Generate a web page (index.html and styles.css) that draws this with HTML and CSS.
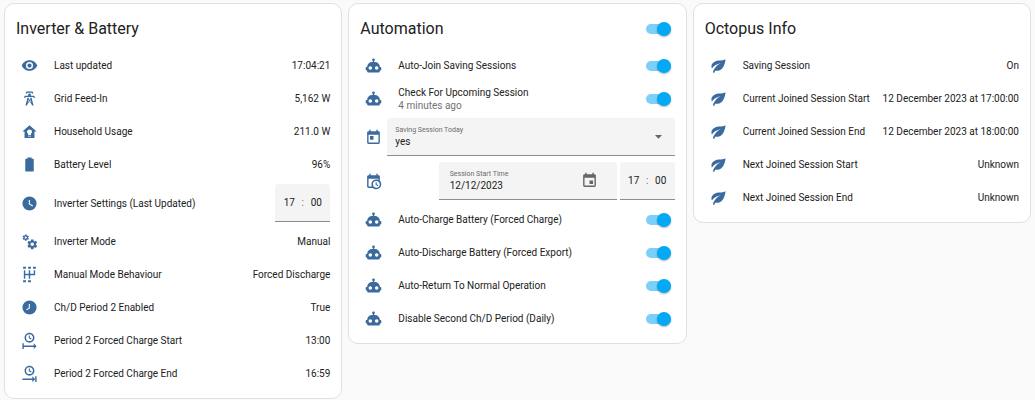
FILE: index.html
```html
<!DOCTYPE html>
<html lang="en">
<head>
    <meta charset="UTF-8">
    <meta name="viewport" content="width=device-width, initial-scale=1">
    <title>Inverter Dashboard</title>
    <link rel="stylesheet" href="styles.css">
</head>
<body>
    <!-- Icon set -->
    <svg class="icon-set" aria-hidden="true">
        <symbol id="eye" viewBox="0 0 24 24"><path d="M12,9A3,3 0 0,0 9,12A3,3 0 0,0 12,15A3,3 0 0,0 15,12A3,3 0 0,0 12,9M12,17A5,5 0 0,1 7,12A5,5 0 0,1 12,7A5,5 0 0,1 17,12A5,5 0 0,1 12,17M12,4.5C7,4.5 2.73,7.61 1,12C2.73,16.39 7,19.5 12,19.5C17,19.5 21.27,16.39 23,12C21.27,7.61 17,4.5 12,4.5Z"/></symbol>
        <symbol id="tower" viewBox="0 0 24 24"><path d="M8.28,5.45L6.5,4.55L7.76,2H16.23L17.5,4.55L15.72,5.44L15,4H9L8.28,5.45M18.62,8H14.09L13.3,5H10.7L9.91,8H5.38L4.1,10.55L5.89,11.44L6.62,10H17.38L18.1,11.45L19.89,10.56L18.62,8M17.77,22H15.7L15.46,21.1L12,15.9L8.53,21.1L8.3,22H6.23L9.12,11H11.19L10.83,12.35L12,14.1L13.16,12.35L12.81,11H14.88L17.77,22M11.4,15L10.5,13.65L9.32,18.13L11.4,15M14.68,18.12L13.5,13.64L12.6,15L14.68,18.12Z"/></symbol>
        <symbol id="home" viewBox="0 0 24 24"><path fill-rule="evenodd" d="M12,3L2,12H5V21H19V12H22L12,3M12,9A3.5,3.5 0 0,1 15.5,12.5C15.5,13.700 14.900,14.700 14,15.300V17H10V15.300C9.100,14.700 8.500,13.700 8.500,12.500A3.5,3.5 0 0,1 12,9M10,18H14V19H10Z"/></symbol>
        <symbol id="battery" viewBox="0 0 24 24"><path d="M16.67,4H15V2H9V4H7.33A1.33,1.33 0 0,0 6,5.33V20.66C6,21.4 6.6,22 7.33,22H16.66C17.4,22 18,21.4 18,20.67V5.33C18,4.6 17.4,4 16.67,4Z"/></symbol>
        <symbol id="clock" viewBox="0 0 24 24"><path d="M12,2A10,10 0 0,0 2,12A10,10 0 0,0 12,22A10,10 0 0,0 22,12A10,10 0 0,0 12,2M16.2,16.2L11,13V7H12.5V12.2L17,14.9L16.2,16.2Z"/></symbol>
        <symbol id="cogs" viewBox="0 0 24 24"><path d="M15.9,18.45C17.25,18.45 18.35,17.35 18.35,16C18.35,14.65 17.25,13.55 15.9,13.55C14.54,13.55 13.45,14.65 13.45,16C13.45,17.35 14.54,18.45 15.9,18.45M21.1,16.68L22.58,17.84C22.71,17.95 22.75,18.13 22.66,18.29L21.26,20.71C21.17,20.86 21,20.92 20.83,20.86L19.09,20.16C18.73,20.44 18.33,20.67 17.91,20.85L17.64,22.7C17.62,22.87 17.47,23 17.3,23H14.5C14.32,23 14.18,22.87 14.15,22.7L13.89,20.85C13.46,20.67 13.07,20.44 12.71,20.16L10.96,20.86C10.81,20.92 10.62,20.86 10.54,20.71L9.14,18.29C9.05,18.13 9.09,17.95 9.22,17.84L10.7,16.68L10.65,16L10.7,15.31L9.22,14.16C9.09,14.05 9.05,13.86 9.14,13.71L10.54,11.29C10.62,11.13 10.81,11.07 10.96,11.13L12.71,11.84C13.07,11.56 13.46,11.32 13.89,11.15L14.15,9.29C14.18,9.13 14.32,9 14.5,9H17.3C17.47,9 17.62,9.13 17.64,9.29L17.91,11.15C18.33,11.32 18.73,11.56 19.09,11.84L20.83,11.13C21,11.07 21.17,11.13 21.26,11.29L22.66,13.71C22.75,13.86 22.71,14.05 22.58,14.16L21.1,15.31L21.15,16L21.1,16.68M6.69,8.07C7.56,8.07 8.26,7.37 8.26,6.5C8.26,5.63 7.56,4.92 6.69,4.92A1.58,1.58 0 0,0 5.11,6.5C5.11,7.37 5.82,8.07 6.69,8.07M10.03,6.94L11,7.68C11.07,7.75 11.09,7.87 11.03,7.97L10.13,9.53C10.08,9.63 9.96,9.67 9.86,9.63L8.74,9.18L8,9.62L7.81,10.81C7.79,10.92 7.7,11 7.59,11H5.79C5.67,11 5.58,10.92 5.56,10.81L5.4,9.62L4.64,9.18L3.5,9.63C3.41,9.67 3.3,9.63 3.24,9.53L2.34,7.97C2.28,7.87 2.31,7.75 2.39,7.68L3.34,6.94L3.31,6.5L3.34,6.06L2.39,5.32C2.31,5.25 2.28,5.13 2.34,5.03L3.24,3.47C3.3,3.37 3.41,3.33 3.5,3.37L4.63,3.82L5.4,3.38L5.56,2.19C5.58,2.08 5.67,2 5.79,2H7.59C7.7,2 7.79,2.08 7.81,2.19L8,3.38L8.74,3.82L9.86,3.37C9.96,3.33 10.08,3.37 10.13,3.47L11.03,5.03C11.09,5.13 11.07,5.25 11,5.32L10.03,6.06L10.06,6.5L10.03,6.94Z"/></symbol>
        <symbol id="shifter" viewBox="0 0 24 24"><path d="M3,1H7V4H3ZM10,1H14V4H10ZM17,1H21V4H17ZM3,20H7V23H3ZM10,20H14V23H10ZM4,6H6V11H11V6H13V11H18V6H20V13H13V18H11V13H6V18H4Z"/></symbol>
        <symbol id="clock-eight" viewBox="0 0 24 24"><path d="M12,2A10,10 0 0,0 2,12A10,10 0 0,0 12,22A10,10 0 0,0 22,12A10,10 0 0,0 12,2M12.5,13L8.2,16L7.2,14.7L11,12.2V7H12.5V13Z"/></symbol>
        <symbol id="clock-start" viewBox="0 0 24 24"><path d="M12,1C8.14,1 5,4.14 5,8A7,7 0 0,0 12,15C15.86,15 19,11.87 19,8C19,4.14 15.86,1 12,1M12,3.15C14.67,3.15 16.85,5.32 16.85,8C16.85,10.68 14.67,12.85 12,12.85A4.85,4.85 0 0,1 7.15,8A4.85,4.85 0 0,1 12,3.15M11,5V8.69L14.19,10.53L14.94,9.23L12.5,7.82V5M2,16V24H4V21H18V24L22,20L18,16V19H4V16"/></symbol>
        <symbol id="clock-end" viewBox="0 0 24 24"><path d="M12,1C8.14,1 5,4.14 5,8A7,7 0 0,0 12,15C15.86,15 19,11.87 19,8C19,4.14 15.86,1 12,1M12,3.15C14.67,3.15 16.85,5.32 16.85,8C16.85,10.68 14.67,12.85 12,12.85A4.85,4.85 0 0,1 7.15,8A4.85,4.85 0 0,1 12,3.15M11,5V8.69L14.19,10.53L14.94,9.23L12.5,7.82V5M16,16V19H2V21H16V24L20,20V24H22V16H20V20L16,16"/></symbol>
        <symbol id="robot" viewBox="0 0 24 24"><path d="M12,2A2,2 0 0,1 14,4C14,4.74 13.6,5.39 13,5.73V7H14A7,7 0 0,1 21,14H22A1,1 0 0,1 23,15V18A1,1 0 0,1 22,19H21V20A2,2 0 0,1 19,22H5A2,2 0 0,1 3,20V19H2A1,1 0 0,1 1,18V15A1,1 0 0,1 2,14H3A7,7 0 0,1 10,7H11V5.73C10.4,5.39 10,4.74 10,4A2,2 0 0,1 12,2M7.5,13A2.5,2.5 0 0,0 5,15.5A2.5,2.5 0 0,0 7.5,18A2.5,2.5 0 0,0 10,15.5A2.5,2.5 0 0,0 7.5,13M16.5,13A2.5,2.5 0 0,0 14,15.5A2.5,2.5 0 0,0 16.5,18A2.5,2.5 0 0,0 19,15.5A2.5,2.5 0 0,0 16.5,13Z"/></symbol>
        <symbol id="calendar-today" viewBox="0 0 24 24"><path d="M7,10H12V15H7M19,19H5V8H19M19,3H18V1H16V3H8V1H6V3H5C3.89,3 3,3.9 3,5V19A2,2 0 0,0 5,21H19A2,2 0 0,0 21,19V5A2,2 0 0,0 19,3Z"/></symbol>
        <symbol id="calendar-clock" viewBox="0 0 24 24"><path d="M15,13H16.5V15.82L18.94,17.23L18.19,18.53L15,16.69V13M19,8H5V19H9.67C9.24,18.09 9,17.07 9,16A7,7 0 0,1 16,9C17.07,9 18.09,9.24 19,9.67V8M5,21C3.89,21 3,20.1 3,19V5C3,3.89 3.89,3 5,3H6V1H8V3H16V1H18V3H19A2,2 0 0,1 21,5V11.1C22.24,12.36 23,14.09 23,16A7,7 0 0,1 16,23C14.09,23 12.36,22.24 11.1,21H5M16,11.15A4.85,4.85 0 0,0 11.15,16C11.15,18.68 13.32,20.85 16,20.85A4.85,4.85 0 0,0 20.85,16C20.85,13.32 18.68,11.15 16,11.15Z"/></symbol>
        <symbol id="calendar" viewBox="0 0 24 24"><path d="M19,19H5V8H19M16,1V3H8V1H6V3H5C3.89,3 3,3.89 3,5V19A2,2 0 0,0 5,21H19A2,2 0 0,0 21,19V5C21,3.89 20.1,3 19,3H18V1M17,12H12V17H17V12Z"/></symbol>
        <symbol id="arrow-down" viewBox="0 0 24 24"><path d="M7,10L12,15L17,10H7Z"/></symbol>
        <symbol id="leaf" viewBox="0 0 24 24"><path d="M22,3C20.5,4.5 16,4.3 12,5C6,6 2,9 2,13.5C2,14.7 2.3,15.6 2.7,16.3C5.5,12.3 10,9.6 15,8.8C10.5,11 6.3,14.5 4,21.500L6,22.500L7.200,19.500C14,20 20.500,16.500 22,3Z"/></symbol>
    </svg>

    <main class="dashboard">
        <section class="card">
            <header class="card-header">
                <h1>Inverter &amp; Battery</h1>
            </header>
            <div class="row">
                <svg class="icon"><use href="#eye"/></svg>
                <span class="name">Last updated</span>
                <span class="value">17:04:21</span>
            </div>
            <div class="row">
                <svg class="icon"><use href="#tower"/></svg>
                <span class="name">Grid Feed-In</span>
                <span class="value">5,162 W</span>
            </div>
            <div class="row">
                <svg class="icon"><use href="#home"/></svg>
                <span class="name">Household Usage</span>
                <span class="value">211.0 W</span>
            </div>
            <div class="row">
                <svg class="icon"><use href="#battery"/></svg>
                <span class="name">Battery Level</span>
                <span class="value">96%</span>
            </div>
            <div class="row">
                <svg class="icon"><use href="#clock"/></svg>
                <label class="name" for="settingsHour">Inverter Settings (Last Updated)</label>
                <div class="time-field">
                    <input type="text" id="settingsHour" value="17">
                    <span>:</span>
                    <input type="text" id="settingsMinute" value="00" aria-label="Minutes">
                </div>
            </div>
            <div class="row">
                <svg class="icon"><use href="#cogs"/></svg>
                <span class="name">Inverter Mode</span>
                <span class="value">Manual</span>
            </div>
            <div class="row">
                <svg class="icon"><use href="#shifter"/></svg>
                <span class="name">Manual Mode Behaviour</span>
                <span class="value">Forced Discharge</span>
            </div>
            <div class="row">
                <svg class="icon"><use href="#clock-eight"/></svg>
                <span class="name">Ch/D Period 2 Enabled</span>
                <span class="value">True</span>
            </div>
            <div class="row">
                <svg class="icon"><use href="#clock-start"/></svg>
                <span class="name">Period 2 Forced Charge Start</span>
                <span class="value">13:00</span>
            </div>
            <div class="row">
                <svg class="icon"><use href="#clock-end"/></svg>
                <span class="name">Period 2 Forced Charge End</span>
                <span class="value">16:59</span>
            </div>
        </section>

        <section class="card">
            <header class="card-header">
                <h1>Automation</h1>
                <input type="checkbox" class="toggle" aria-label="Toggle all automations" checked>
            </header>
            <div class="row">
                <svg class="icon"><use href="#robot"/></svg>
                <label class="name" for="autoJoin">Auto-Join Saving Sessions</label>
                <input type="checkbox" class="toggle" id="autoJoin" checked>
            </div>
            <div class="row">
                <svg class="icon"><use href="#robot"/></svg>
                <label class="name" for="checkUpcoming">Check For Upcoming Session <small>4 minutes ago</small></label>
                <input type="checkbox" class="toggle" id="checkUpcoming" checked>
            </div>
            <div class="row">
                <svg class="icon"><use href="#calendar-today"/></svg>
                <div class="field select-field">
                    <div class="field-text">
                        <label for="sessionToday">Saving Session Today</label>
                        <select id="sessionToday">
                            <option>yes</option>
                            <option>no</option>
                        </select>
                    </div>
                    <svg class="field-icon"><use href="#arrow-down"/></svg>
                </div>
            </div>
            <div class="row date-row">
                <svg class="icon"><use href="#calendar-clock"/></svg>
                <div class="field date-field">
                    <div class="field-text">
                        <label for="sessionDate">Session Start Time</label>
                        <input type="text" id="sessionDate" value="12/12/2023">
                    </div>
                    <svg class="field-icon"><use href="#calendar"/></svg>
                </div>
                <div class="time-field">
                    <input type="text" id="startHour" value="17" aria-label="Hours">
                    <span>:</span>
                    <input type="text" id="startMinute" value="00" aria-label="Minutes">
                </div>
            </div>
            <div class="row">
                <svg class="icon"><use href="#robot"/></svg>
                <label class="name" for="autoCharge">Auto-Charge Battery (Forced Charge)</label>
                <input type="checkbox" class="toggle" id="autoCharge" checked>
            </div>
            <div class="row">
                <svg class="icon"><use href="#robot"/></svg>
                <label class="name" for="autoDischarge">Auto-Discharge Battery (Forced Export)</label>
                <input type="checkbox" class="toggle" id="autoDischarge" checked>
            </div>
            <div class="row">
                <svg class="icon"><use href="#robot"/></svg>
                <label class="name" for="autoReturn">Auto-Return To Normal Operation</label>
                <input type="checkbox" class="toggle" id="autoReturn" checked>
            </div>
            <div class="row">
                <svg class="icon"><use href="#robot"/></svg>
                <label class="name" for="disableSecond">Disable Second Ch/D Period (Daily)</label>
                <input type="checkbox" class="toggle" id="disableSecond" checked>
            </div>
        </section>

        <section class="card">
            <header class="card-header">
                <h1>Octopus Info</h1>
            </header>
            <div class="row">
                <svg class="icon"><use href="#leaf"/></svg>
                <span class="name">Saving Session</span>
                <span class="value">On</span>
            </div>
            <div class="row">
                <svg class="icon"><use href="#leaf"/></svg>
                <span class="name">Current Joined Session Start</span>
                <span class="value">12 December 2023 at 17:00:00</span>
            </div>
            <div class="row">
                <svg class="icon"><use href="#leaf"/></svg>
                <span class="name">Current Joined Session End</span>
                <span class="value">12 December 2023 at 18:00:00</span>
            </div>
            <div class="row">
                <svg class="icon"><use href="#leaf"/></svg>
                <span class="name">Next Joined Session Start</span>
                <span class="value">Unknown</span>
            </div>
            <div class="row">
                <svg class="icon"><use href="#leaf"/></svg>
                <span class="name">Next Joined Session End</span>
                <span class="value">Unknown</span>
            </div>
        </section>
    </main>
</body>
</html>
```
FILE: styles.css
```css
* {
    box-sizing: border-box;
}

body {
    margin: 0;
    background-color: #fafafa;
    color: #212121;
    font-family: Roboto, sans-serif;
    font-size: 10px;
    line-height: 13px;
}

.icon-set {
    display: none;
}

.dashboard {
    display: grid;
    grid-template-columns: repeat(3, minmax(0, 1fr));
    align-items: start;
    gap: 6px;
    padding: 3px 4px 0;
}

.card {
    display: flex;
    flex-direction: column;
    gap: 6px;
    padding: 11px;
    background-color: white;
    border: 1px solid #e0e0e0;
    border-radius: 10px;
}

.card-header {
    display: flex;
    align-items: center;
    justify-content: space-between;
    height: 28px;
    margin-bottom: 3px;
}

.card-header h1 {
    margin: 0;
    font-size: 16px;
    font-weight: 400;
    line-height: 24px;
}

.row {
    display: flex;
    align-items: center;
    min-height: 27px;
}

.icon {
    flex: none;
    width: 17px;
    height: 17px;
    margin: 0 5px;
    fill: #3b6b9e;
}

.name {
    flex: 1;
    margin-left: 11px;
    white-space: nowrap;
}

.name small {
    display: block;
    color: #727272;
    font-size: 10px;
}

.value {
    white-space: nowrap;
}

/* Toggle switch */
.toggle {
    appearance: none;
    display: flex;
    align-items: center;
    justify-content: flex-end;
    flex: none;
    width: 25px;
    height: 10px;
    margin: 0 4px 0 0;
    border-radius: 5px;
    background-color: #7bd0f9;
    cursor: pointer;
}

.toggle::before {
    content: "";
    width: 14px;
    height: 14px;
    border-radius: 50%;
    background-color: #03a9f4;
    box-shadow: 0 1px 2px rgba(0, 0, 0, 0.3);
}

.toggle:not(:checked) {
    justify-content: flex-start;
    background-color: #bdbdbd;
}

.toggle:not(:checked)::before {
    background-color: #fafafa;
}

/* Filled form fields */
.field,
.time-field {
    display: flex;
    align-items: center;
    height: 38px;
    background-color: #f4f4f4;
    border-bottom: 1px solid #8c8c8c;
    border-radius: 3px 3px 0 0;
}

.field input,
.field select,
.time-field input {
    appearance: none;
    padding: 0;
    border: none;
    outline: none;
    background: none;
    color: inherit;
    font: inherit;
}

.field-text {
    display: flex;
    flex: 1;
    flex-direction: column;
    min-width: 0;
}

.field-text label {
    color: #6c6c6c;
    font-size: 7px;
    line-height: 9px;
}

.field-icon {
    flex: none;
    width: 17px;
    height: 17px;
    fill: #666;
}

.select-field {
    flex: 1;
    padding: 0 8px;
}

.date-row {
    gap: 3px;
}

.date-field {
    width: 178px;
    margin-left: auto;
    padding: 0 19px 0 11px;
}

.time-field {
    justify-content: space-between;
    width: 55px;
    padding: 0 7px;
}

.time-field input {
    width: 14px;
    text-align: center;
}

.time-field span {
    color: #727272;
}
```
